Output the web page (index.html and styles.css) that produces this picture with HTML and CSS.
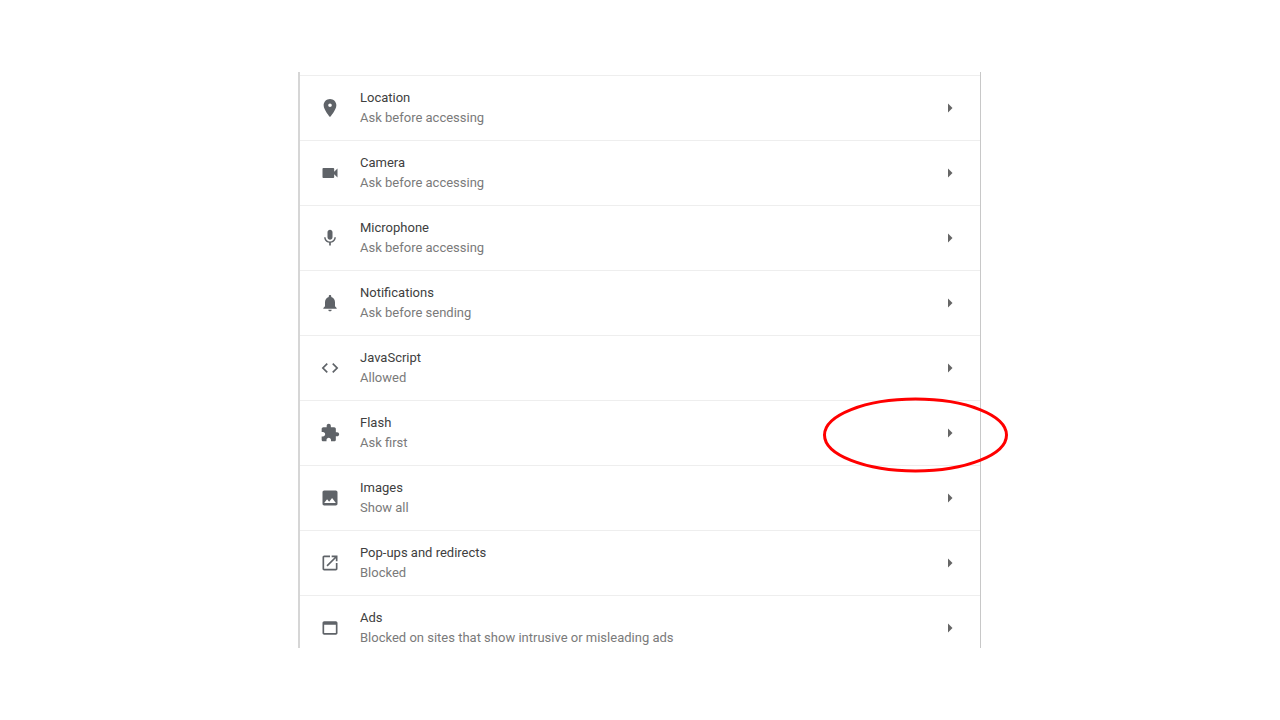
FILE: index.html
```html
<!DOCTYPE html>
<html lang="en">
<head>
  <meta charset="UTF-8" />
  <meta name="viewport" content="width=device-width, initial-scale=1.0"/>
  <title>Site settings</title>
  <link rel="stylesheet" href="styles.css">
</head>
<body>
  <div class="panel">
    <div class="row">
      <svg class="icon" viewBox="1 1 22 22"><path fill-rule="evenodd" d="M12 2C8.13 2 5 5.13 5 9c0 5.25 7 13 7 13s7-7.75 7-13c0-3.87-3.13-7-7-7zm0 9a2 2 0 0 1 0-4 2 2 0 0 1 0 4z"/></svg>
      <div class="text">
        <div class="title">Location</div>
        <div class="sub">Ask before accessing</div>
      </div>
      <svg class="arrow" viewBox="0 0 5 10"><path d="M0 .5L4.5 5 0 9.5z"/></svg>
    </div>
    <div class="row">
      <svg class="icon" viewBox="0 0 24 24"><path d="M17 10.5V7c0-.55-.45-1-1-1H4c-.55 0-1 .45-1 1v10c0 .55.45 1 1 1h12c.55 0 1-.45 1-1v-3.5l4 4v-11l-4 4z"/></svg>
      <div class="text">
        <div class="title">Camera</div>
        <div class="sub">Ask before accessing</div>
      </div>
      <svg class="arrow" viewBox="0 0 5 10"><path d="M0 .5L4.5 5 0 9.5z"/></svg>
    </div>
    <div class="row">
      <svg class="icon" viewBox="0 0 24 24"><path d="M12 14c1.66 0 3-1.34 3-3V5c0-1.66-1.34-3-3-3S9 3.34 9 5v6c0 1.66 1.34 3 3 3zm5.3-3c0 3-2.54 5.1-5.3 5.1S6.7 14 6.7 11H5c0 3.41 2.72 6.23 6 6.72V21h2v-3.28c3.28-.48 6-3.3 6-6.72h-1.7z"/></svg>
      <div class="text">
        <div class="title">Microphone</div>
        <div class="sub">Ask before accessing</div>
      </div>
      <svg class="arrow" viewBox="0 0 5 10"><path d="M0 .5L4.5 5 0 9.5z"/></svg>
    </div>
    <div class="row">
      <svg class="icon" viewBox="0 0 24 24"><path d="M12 22c1.1 0 2-.9 2-2h-4c0 1.1.9 2 2 2zm6-6v-5c0-3.07-1.63-5.64-4.5-6.32V4c0-.83-.67-1.5-1.5-1.5s-1.5.67-1.5 1.5v.68C7.64 5.36 6 7.92 6 11v5l-2 2v1h16v-1l-2-2z"/></svg>
      <div class="text">
        <div class="title">Notifications</div>
        <div class="sub">Ask before sending</div>
      </div>
      <svg class="arrow" viewBox="0 0 5 10"><path d="M0 .5L4.5 5 0 9.5z"/></svg>
    </div>
    <div class="row">
      <svg class="icon" viewBox="0 0 24 24"><path d="M9.4 16.6L4.8 12l4.6-4.6L8 6l-6 6 6 6 1.4-1.4zm5.2 0l4.6-4.6-4.6-4.6L16 6l6 6-6 6-1.4-1.4z"/></svg>
      <div class="text">
        <div class="title">JavaScript</div>
        <div class="sub">Allowed</div>
      </div>
      <svg class="arrow" viewBox="0 0 5 10"><path d="M0 .5L4.5 5 0 9.5z"/></svg>
    </div>
    <div class="row">
      <svg class="icon" viewBox="0 0 24 24"><path d="M20.5 11H19V7c0-1.1-.9-2-2-2h-4V3.5C13 2.12 11.88 1 10.5 1S8 2.12 8 3.5V5H4c-1.1 0-1.99.9-1.99 2v3.8H3.5c1.49 0 2.7 1.21 2.7 2.7s-1.21 2.7-2.7 2.7H2V20c0 1.1.9 2 2 2h3.8v-1.5c0-1.49 1.21-2.7 2.7-2.7 1.49 0 2.7 1.21 2.7 2.7V22H17c1.1 0 2-.9 2-2v-4h1.5c1.38 0 2.5-1.12 2.5-2.5S21.88 11 20.5 11z"/></svg>
      <div class="text">
        <div class="title">Flash</div>
        <div class="sub">Ask first</div>
      </div>
      <svg class="arrow" viewBox="0 0 5 10"><path d="M0 .5L4.5 5 0 9.5z"/></svg>
    </div>
    <div class="row">
      <svg class="icon" viewBox="0 0 24 24"><path d="M21 19V5c0-1.1-.9-2-2-2H5c-1.1 0-2 .9-2 2v14c0 1.1.9 2 2 2h14c1.1 0 2-.9 2-2zM8.5 13.5l2.5 3.01L14.5 12l4.5 6H5l3.5-4.5z"/></svg>
      <div class="text">
        <div class="title">Images</div>
        <div class="sub">Show all</div>
      </div>
      <svg class="arrow" viewBox="0 0 5 10"><path d="M0 .5L4.5 5 0 9.5z"/></svg>
    </div>
    <div class="row">
      <svg class="icon" viewBox="0 0 24 24"><path d="M19 19H5V5h7V3H5c-1.11 0-2 .9-2 2v14c0 1.1.89 2 2 2h14c1.1 0 2-.9 2-2v-7h-2v7zM14 3v2h3.59l-9.83 9.83 1.41 1.41L19 6.41V10h2V3h-7z"/></svg>
      <div class="text">
        <div class="title">Pop-ups and redirects</div>
        <div class="sub">Blocked</div>
      </div>
      <svg class="arrow" viewBox="0 0 5 10"><path d="M0 .5L4.5 5 0 9.5z"/></svg>
    </div>
    <div class="row">
      <svg class="icon" viewBox="0 0 24 24"><path d="M19 4H5c-1.11 0-2 .9-2 2v12c0 1.1.89 2 2 2h14c1.1 0 2-.9 2-2V6c0-1.1-.89-2-2-2zm0 14H5V8h14v10z"/></svg>
      <div class="text">
        <div class="title">Ads</div>
        <div class="sub">Blocked on sites that show intrusive or misleading ads</div>
      </div>
      <svg class="arrow" viewBox="0 0 5 10"><path d="M0 .5L4.5 5 0 9.5z"/></svg>
    </div>
  </div>

  <!-- red marker drawn over the Flash row -->
  <svg class="marker" viewBox="0 0 190 80">
    <ellipse cx="95.5" cy="40" rx="91" ry="36"/>
  </svg>
</body>
</html>
```

FILE: styles.css
```css
body {
    margin: 0;
    padding: 0;
    height: 720px;
    background: #fff;
    font-family: Roboto, 'Liberation Sans', sans-serif;
    overflow: hidden;
    position: relative;
}

.panel {
    width: 680px;
    height: 573px;
    margin: 72px 0 0 298px;
    padding-top: 3px;
    border-left: 2px solid #d6d6d6;
    border-right: 1px solid #c8c8c8;
    overflow: hidden;
}

.row {
    height: 64px;
    display: flex;
    align-items: center;
    padding: 0 27px 0 20px;
    border-top: 1px solid #eeeeee;
}

.icon {
    width: 20px;
    height: 20px;
    fill: #5f6368;
    flex-shrink: 0;
}

.text {
    flex: 1;
    margin-left: 20px;
}

.title {
    font-size: 13px;
    line-height: 20px;
    color: #404040;
}

.sub {
    font-size: 13px;
    line-height: 20px;
    color: #7a7a7a;
}

.arrow {
    width: 5px;
    height: 10px;
    fill: #666;
}

.marker {
    position: absolute;
    left: 820px;
    top: 395px;
    width: 190px;
    height: 80px;
}

.marker ellipse {
    fill: none;
    stroke: #ff0000;
    stroke-width: 3px;
}
```
